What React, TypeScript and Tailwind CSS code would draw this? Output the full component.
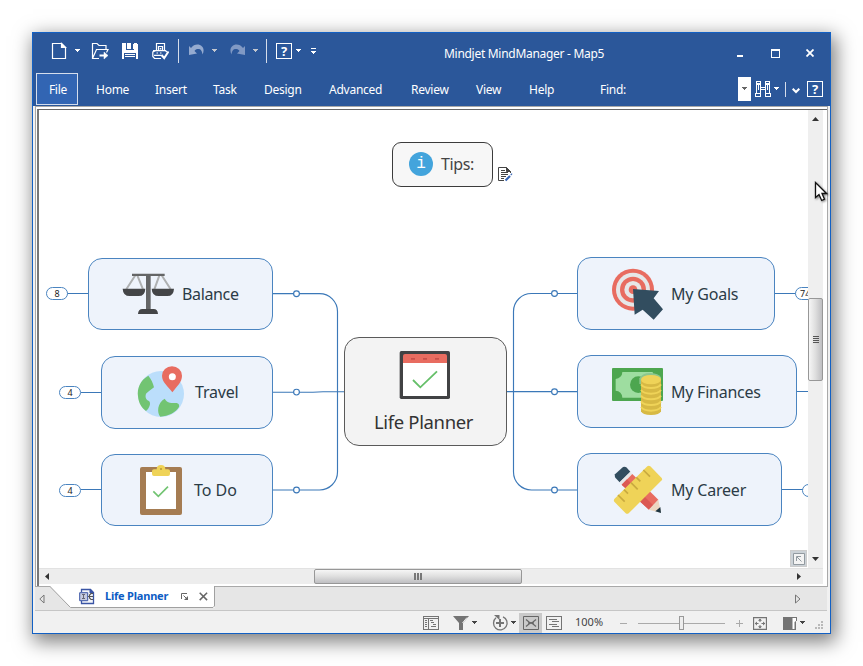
import type { ReactNode } from "react";

const UI = "font-['Noto_Sans','Open_Sans',sans-serif]";

function Caret({ className = "", color = "#fff" }: { className?: string; color?: string }) {
  return (
    <svg width="6" height="4" viewBox="0 0 6 4" className={`shrink-0 ${className}`} shapeRendering="crispEdges">
      <path d="M0 0h5v1h-1v1h-1v1h-1v-1h-1v-1h-1z" fill={color} />
    </svg>
  );
}

function HelpBox({ className = "" }: { className?: string }) {
  return (
    <span
      className={`flex h-4 w-4 shrink-0 items-center justify-center border border-white font-['Noto_Sans'] text-[13px] leading-none font-bold text-white ${className}`}
    >
      ?
    </span>
  );
}

function TitleBar() {
  return (
    <div className="flex h-10 shrink-0 items-start">
      <svg className="mt-[9px] ml-[18px] shrink-0" width="16" height="18" fill="none" stroke="#fff" strokeWidth="1.2">
        <path d="M1.5 1.5h9l4 4v11h-13z" />
        <path d="M10.5 1.5v4h4z" fill="#fff" />
      </svg>
      <Caret className="mt-4 ml-2" />
      <svg className="mt-[9px] ml-2.5 shrink-0" width="18" height="18" fill="none" stroke="#fff" strokeWidth="1.2">
        <path d="M8 16.500H1.500V1.500h4.500l2 2h7v4.500M1.500 16.500l4-9h11.500l-1.500 3" />
        <path d="M8.500 13.500h6" strokeWidth="2" />
        <path d="M13 10l4 3.500-4 3.500z" strokeWidth=".5" fill="#fff" />
      </svg>
      <svg className="mt-[10px] ml-[13px] shrink-0" width="16" height="16" shapeRendering="crispEdges">
        <path d="M0 0h14l2 2v14H0z" fill="#fff" />
        <path d="M4 0h8v7H4zM2 10h12v6H2z" fill="#2b579a" />
        <path d="M5 0h4v6H5z" fill="#fff" />
        <path d="M11 1h1v5h-1zM3 11h10v1H3zM3 13h10v1H3z" fill="#fff" />
      </svg>
      <svg className="mt-[9px] ml-[14px] shrink-0" width="17" height="18" fill="none" stroke="#fff" strokeWidth="1.200">
        <path d="M4.500 8V1.500h8V8M6.500 8V4.500h4V8" />
        <path d="M8.500 7.500V6" strokeWidth="1.500" />
        <path d="M4 8.500L.800 10v4.500l1.700 2H9M1 8.700h12.500l1.500 1.300M2 13.300h7.500M4.500 11h1.500M8 11h1.500" />
        <path d="M9.500 13l2.700 3L16.500 9.500" strokeWidth="2" />
      </svg>
      <i className="mt-1.5 ml-[9px] h-6 w-px bg-white/80" />
      <svg className="mt-[11px] ml-2.5 shrink-0" width="16" height="13">
        <path d="M0 2l2 2C5 0 10-.500 13 2.500c2 2 2 5 .5 8C13 7 12 5 9 5 7.500 5 6.500 5.500 5.500 7L8 9.500 0 11z" fill="#95abd0" />
      </svg>
      <Caret className="mt-4 ml-[7px]" color="#c3c7cf" />
      <svg className="mt-[11px] ml-3 shrink-0" width="16" height="13">
        <path d="M15 2l-2 2C10 0 5-.500 2 2.500c-2 2-2 5-.5 8C2 7 3 5 6 5c1.500 0 2.500.5 3.500 2L7 9.500 15 11z" fill="#8099c4" />
      </svg>
      <Caret className="mt-4 ml-[7px]" color="#c3c7cf" />
      <i className="mt-1.5 ml-[7px] h-6 w-px bg-white/80" />
      <HelpBox className="mt-2.5 ml-[9px]" />
      <Caret className="mt-4 ml-1" />
      <svg className="mt-[15px] ml-[9px] shrink-0" width="6" height="7" shapeRendering="crispEdges">
        <path d="M0 0h5v1H0zM0 3h5v1H4v1H3v1H2V5H1V4H0z" fill="#fff" />
      </svg>
      <span className="mt-3 ml-[127px] w-[164px] text-[12px] leading-[18px] tracking-[-0.29px] whitespace-nowrap text-white">
        Mindjet MindManager - Map5
      </span>
      <i className="mt-[22px] ml-[129px] h-0.5 w-1.5 bg-white" />
      <i className="mt-4 ml-7 h-[9px] w-[9px] border border-t-2 border-white" />
      <svg className="mt-4 ml-[26px] shrink-0" width="8" height="8">
        <path d="M.5.5l7 7M7.500.5l-7 7" stroke="#fff" strokeWidth="1.800" />
      </svg>
    </div>
  );
}

function MenuBar() {
  return (
    <div className="flex h-8 shrink-0 items-center text-[12px] leading-4 tracking-[-0.25px] whitespace-nowrap text-white">
      <span className="ml-[3px] flex h-8 w-[42px] items-center justify-center border border-[#d5deed] bg-[#3265b3] pt-px pl-0.5">
        File
      </span>
      <span className="ml-[18px] w-[59px] pt-px">Home</span>
      <span className="w-[58px] pt-px">Insert</span>
      <span className="w-[51px] pt-px">Task</span>
      <span className="w-[65px] pt-px">Design</span>
      <span className="w-[82px] pt-px">Advanced</span>
      <span className="w-[65px] pt-px">Review</span>
      <span className="w-[53px] pt-px">View</span>
      <span className="w-[71px] pt-px">Help</span>
      <span className="w-[138px] pt-px">Find:</span>
      <span className="flex h-6 w-[13px] items-center justify-center bg-white">
        <Caret color="#666" />
      </span>
      <svg className="ml-1 shrink-0" width="16" height="16" fill="none" stroke="#fff" shapeRendering="crispEdges">
        <path d="M1.500.500h4v2h-4zM10.500.500h4v2h-4zM1.500 3.500h4v9h-4zM10.500 3.500h4v9h-4zM.500 12.500h5v3h-5zM10.500 12.500h5v3h-5zM5.500 6.500h5M5.500 8.500h5M3.500 3.500v5M12.500 3.500v5" />
      </svg>
      <Caret className="ml-[3px]" />
      <i className="ml-[5px] h-[15px] w-px bg-white/80" />
      <svg className="mt-1 ml-1.5 shrink-0" width="8" height="6" fill="none">
        <path d="M.7.700L4 4 7.300.700" stroke="#fff" strokeWidth="2" />
      </svg>
      <HelpBox className="ml-[7px]" />
    </div>
  );
}

function ScalesIcon() {
  return (
    <svg width="52" height="42" viewBox="258 102 156 126">
      <path d="M299 107l-28 44M303 107l18 44M371 107l-16 44M376 107l28 44" stroke="#aeb0b1" strokeWidth="6" />
      <path d="M288 104h98v7H288zM330 108h14v103H330z" fill="#646566" />
      <path d="M260 149h68q-1 22-20 22h-27q-20 0-21-22zM347 149h67q-1 22-20 22h-26q-20 0-21-22zM306 225q1-15 13-15h34q12 0 13 15z" fill="#444547" />
    </svg>
  );
}

function GlobeIcon() {
  return (
    <svg width="48" height="52" viewBox="303 78 144 156">
      <circle cx="375" cy="162" r="69" fill="#bbdefb" />
      <path d="M337 107c-25 14-34 39-31 62 2 22 12 36 24 44 10-7 16-24 9-30-10-5-12-12-9-22 8-6 14-12 24-19-3-14-8-24-17-35zM386 176c8 15 22 12 34 13 8 0 11 7 9 12-10 16-31 28-56 29-11-13-9-41 13-54z" fill="#72c472" />
      <path d="M409 157c-14-20-31-30-31-50a30 28 0 0 1 60 0c0 20-15 31-29 50z" fill="#e86c60" />
      <circle cx="409" cy="110" r="10.500" fill="#fff" />
    </svg>
  );
}

function ClipboardIcon() {
  return (
    <svg width="44" height="52" viewBox="309 372 132 156">
      <rect x="312" y="381" width="126" height="144" rx="6" fill="#a57c52" />
      <path d="M330 396h90v111h-90z" fill="#fff" />
      <path d="M348 393q0-5 6-5h8q0-13 13-13t13 13h8q6 0 6 5v9q0 6-6 6h-42q-6 0-6-6z" fill="#efd358" />
      <circle cx="375" cy="387" r="3" fill="#b89b35" />
      <path d="M352 454l15 15 29-29" fill="none" stroke="#72c472" strokeWidth="5" />
    </svg>
  );
}

function CalendarIcon() {
  return (
    <svg width="52" height="50" viewBox="207 660 156 150">
      <rect x="209" y="663" width="151" height="144" rx="5" fill="#414244" />
      <path d="M219 698h132v100H219z" fill="#fff" />
      <path d="M219 699v-21q0-6 6-6h120q6 0 6 6v21z" fill="#e86c60" />
      <path d="M243 684h12v5h-12zM279 684h12v5h-12zM315 684h12v5h-12z" fill="#c9504a" />
      <path d="M249 750l22 22 50-48" fill="none" stroke="#65bf69" strokeWidth="5.500" />
    </svg>
  );
}

function TargetIcon() {
  return (
    <svg width="52" height="52" viewBox="156 81 156 156">
      <circle cx="219" cy="146" r="63" fill="#e86c60" />
      <circle cx="219" cy="146" r="51" fill="#e6e7e8" />
      <circle cx="219" cy="146" r="39" fill="#e86c60" />
      <circle cx="219" cy="146" r="26" fill="#e6e7e8" />
      <circle cx="219" cy="146" r="13" fill="#e86c60" />
      <path d="M219 144l78 6-16 22 28 33-28 31-33-30-24 15z" fill="#324d5f" />
    </svg>
  );
}

function MoneyIcon() {
  return (
    <svg width="52" height="49" viewBox="156 66 156 147">
      <rect x="156" y="69" width="153" height="99" rx="3" fill="#4da64f" />
      <path d="M187 81h91a21 21 0 0 0 20 21v35a21 21 0 0 0-20 21h-91a21 21 0 0 0-20-21v-35a21 21 0 0 0 20-21z" fill="#9edda0" />
      <circle cx="235" cy="119" r="25" fill="#4da64f" />
      <path d="M238 100q10-17 35-16 22 1 30 13v20h-65z" fill="#8cc68e" />
      <path d="M243 104h60v95q-4 11-30 11t-30-11z" fill="#d7b944" />
      <g fill="none" stroke="#efd358" strokeWidth="6">
        <path d="M243 118q8 11 30 11t30-11M243 135q8 11 30 11t30-11M243 152q8 11 30 11t30-11M243 169q8 11 30 11t30-11M243 186q8 11 30 11t30-11" />
      </g>
      <ellipse cx="273" cy="104" rx="30" ry="14" fill="#efd358" />
    </svg>
  );
}

function PencilRulerIcon() {
  return (
    <svg width="52" height="50" viewBox="156 360 156 150">
      <path d="M165 388l24-22q6-2 10 1l12 13-32 32-13-14q-3-5-1-10z" fill="#324d5f" />
      <path d="M211 380l6 7-32 32-6-7z" fill="#e6e7e8" />
      <path d="M217 387l78 77-28 30-82-75z" fill="#e86c60" />
      <path d="M201 403l78 77-12 14-82-75z" fill="#db5853" />
      <path d="M295 464l8 39-37-9z" fill="#ecd7c1" />
      <path d="M301 486l2 18-17-5z" fill="#1d3440" />
      <path d="M262 364q4-3 9 0l34 35q3 4 0 7l-99 99q-5 3-9 0l-34-35q-3-4 0-8z" fill="#efd358" />
      <path d="M250 375l20 20M229 397l12 12M213 413l20 20M192 434l12 12M174 450l20 20" stroke="#c9aa3f" strokeWidth="5" />
    </svg>
  );
}

function Topic({ box, icon, label, text }: { box: string; icon: ReactNode; label: string; text: string }) {
  return (
    <div
      className={`absolute flex items-center rounded-[14px] border border-[#4a84c0] bg-[#eef3fb] whitespace-nowrap text-[#2b3b46] ${box}`}
    >
      {icon}
      <span className={`text-[16px] leading-6 ${text}`}>{label}</span>
    </div>
  );
}

function Count({ place, value }: { place: string; value: string }) {
  return (
    <span
      className={`absolute flex h-[13px] items-center rounded-full border border-[#4a84c0] bg-white text-[9px] leading-none text-[#222] ${place}`}
    >
      {value}
    </span>
  );
}

function MapCanvas() {
  return (
    <div className="relative h-[458px] w-[769px] shrink-0 overflow-hidden bg-white">
      <svg className="absolute inset-0" width="769" height="458" viewBox="39 110 769 458" fill="none" stroke="#3b78b8" strokeWidth="1.150">
        <path d="M273 293.600H319.500a18 18 0 0 1 18 18V472a18 18 0 0 1-18 18H273M273 392.200h40l10-.5h21" />
        <path d="M577 293.500H531.500a18 18 0 0 0-18 18V472a18 18 0 0 0 18 18H577M507 391.600h70" />
        <path d="M67 293.500h21M81 392.500h20M81 489.500h20M775 293.500h21M797 391.500h11M782 489.500h21" />
        <g fill="#fff">
          <circle cx="296.500" cy="293.700" r="2.900" />
          <circle cx="296.500" cy="392.100" r="2.900" />
          <circle cx="296.500" cy="490" r="2.900" />
          <circle cx="554.500" cy="293.500" r="2.900" />
          <circle cx="554.500" cy="391.700" r="2.900" />
          <circle cx="554.500" cy="490" r="2.900" />
        </g>
      </svg>

      <div className="absolute top-8 left-[353px] flex h-[45px] w-[101px] items-center rounded-[9px] border border-[#3c3c3c] bg-[#f7f7f7] pb-px whitespace-nowrap">
        <span className="ml-4 flex h-6 w-6 items-center justify-center rounded-full bg-[#43a4dc] font-['Liberation_Mono'] text-[16px] leading-none text-white">
          i
        </span>
        <span className="ml-2 text-[16px] leading-6 tracking-[-0.4px] text-[#444]">Tips:</span>
      </div>
      <svg className="absolute top-[57px] left-[459px]" width="15" height="15" fill="none" stroke="#444">
        <path d="M6 13.500H.500V.500h8l4 4V6M3 3.500h4M3 5.500h7M3 7.500h7M3 9.500h5M3 11.500h3" />
        <path d="M8.500.500v4h4z" fill="#444" />
        <path d="M7.500 13.500l4.500-4.500" stroke="#3564b5" strokeWidth="2.200" />
        <path d="M13 7l.8.800" stroke="#3564b5" strokeWidth="2" />
      </svg>

      <Topic box="top-[148px] left-[49px] h-[72px] w-[185px] pl-[33px]" icon={<ScalesIcon />} label="Balance" text="ml-2 tracking-[-0.35px]" />
      <Topic box="top-[246px] left-[62px] h-[73px] w-[172px] pb-px pl-[35px]" icon={<GlobeIcon />} label="Travel" text="ml-2.5 tracking-[-0.2px]" />
      <Topic box="top-[344px] left-[62px] h-[72px] w-[172px] pl-[37px]" icon={<ClipboardIcon />} label="To Do" text="ml-[11px]" />
      <Topic box="top-[147px] left-[538px] h-[73px] w-[198px] pl-[34px]" icon={<TargetIcon />} label="My Goals" text="ml-[7px] tracking-[-0.2px]" />
      <Topic box="top-[245px] left-[538px] h-[73px] w-[220px] pl-[34px]" icon={<MoneyIcon />} label="My Finances" text="ml-[7px] tracking-[-0.25px]" />
      <Topic box="top-[343px] left-[538px] h-[73px] w-[205px] pl-[34px]" icon={<PencilRulerIcon />} label="My Career" text="ml-[7px] tracking-[-0.2px]" />

      <div className="absolute top-[227px] left-[305px] flex h-[109px] w-[163px] flex-col items-start rounded-[15px] border border-[#5a5a5a] bg-[#f3f3f3] pt-3">
        <span className="ml-[54px]">
          <CalendarIcon />
        </span>
        <span className="mt-[9px] ml-[29px] text-[18.500px] leading-[26px] tracking-[-0.35px] whitespace-nowrap text-[#333]">
          Life Planner
        </span>
      </div>

      <Count place="top-[177px] left-[7px] w-[22px] justify-center" value="8" />
      <Count place="top-[276px] left-5 w-[22px] justify-center" value="4" />
      <Count place="top-[374px] left-5 w-[22px] justify-center" value="4" />
      <Count place="top-[177px] left-[756px] w-[24px] pl-1" value="74" />
      <Count place="top-[374px] left-[763px] w-[22px]" value="" />

      <span className="absolute top-[440px] left-[751px] flex h-[17px] w-[17px] items-center justify-center border border-[#ccc] bg-[#ccd2d7]">
        <svg width="12" height="12" fill="none" stroke="#929aa0">
          <path d="M.500.500h11v11H.500z" fill="#f3f3f3" />
          <path d="M3.500 8V3.500H8M4 4l4.500 4.500" />
        </svg>
      </span>
    </div>
  );
}

function VerticalScroll() {
  return (
    <div className="flex h-[458px] w-[15px] shrink-0 flex-col items-center bg-[#efefef]">
      <svg className="mt-[7px] shrink-0" width="7" height="4">
        <path d="M0 4l3.500-4L7 4z" fill="#333" />
      </svg>
      <div className="mt-[177px] flex h-[83px] w-[15px] shrink-0 flex-col items-center justify-center gap-px rounded-[2px] border border-[#979797] bg-linear-to-r from-[#f6f6f6] via-[#dedede] to-[#bfbfc2]">
        <i className="h-px w-1.5 bg-[#555]" />
        <i className="h-px w-1.5 bg-[#555]" />
        <i className="h-px w-1.5 bg-[#555]" />
        <i className="h-px w-1.5 bg-[#555]" />
      </div>
      <svg className="mt-auto mb-[7px] shrink-0" width="7" height="4">
        <path d="M0 0l3.500 4L7 0z" fill="#333" />
      </svg>
    </div>
  );
}

function HorizontalScroll() {
  return (
    <div className="flex h-4 w-[784px] shrink-0 items-center border-t border-[#e2e2e2] bg-[#ededed] pb-px">
      <svg className="ml-1.5 shrink-0" width="4" height="7">
        <path d="M4 0L0 3.500 4 7z" fill="#333" />
      </svg>
      <div className="ml-[265px] flex h-[15px] w-[208px] shrink-0 items-center justify-center gap-px rounded-[2px] border border-[#979797] bg-linear-to-b from-[#f6f6f6] via-[#dedede] to-[#bfbfc2]">
        <i className="h-[7px] w-0.5 bg-[#777]" />
        <i className="h-[7px] w-0.5 bg-[#777]" />
        <i className="h-[7px] w-0.5 bg-[#777]" />
      </div>
      <svg className="ml-[275px] shrink-0" width="4" height="7">
        <path d="M0 0l4 3.500L0 7z" fill="#333" />
      </svg>
    </div>
  );
}

function DocumentTabs() {
  return (
    <div className="mr-[3px] ml-0.5 flex h-6 shrink-0 items-start border-b border-[#c6c6c6] bg-[#e6e6e6]">
      <svg className="mt-[7px] ml-1 shrink-0" width="6" height="10" fill="none" stroke="#777">
        <path d="M5 1v8L.800 5z" />
      </svg>
      <div className="relative ml-[5px] flex h-[22px] w-[165px] shrink-0 items-center">
        <svg className="absolute -top-px left-0" width="165" height="23">
          <path d="M0 0h164.500v22H20.500z" fill="#fff" />
          <path d="M0 .5l20.500 21H163l1.500-1.500V0" fill="none" stroke="#a0a0a0" />
        </svg>
        <svg className="relative -mt-1 ml-[29px] shrink-0" width="17" height="17" fill="none" stroke="#3a55a5">
          <path d="M2.500 4V1.500h9l3 3v11h-12V13" strokeWidth="1.300" fill="#f4f6fa" />
          <path d="M11 1.500v3.500h4z" fill="#3a55a5" />
          <path d="M.7 4.700h8v8h-8z" fill="#c6cce0" />
          <path d="M3 6.500h3M3 10.500h3M4.500 6.500v4" stroke="#667" />
          <path d="M9 8.500h5M14 5.500h-2l-1.500 1.500v3l1.500 1.500h2" stroke="#555" strokeWidth="1.100" />
        </svg>
        <span className="relative -mt-1 ml-[9px] w-[76px] text-[11px] font-bold tracking-[-0.2px] whitespace-nowrap text-[#0c5cc4]">
          Life Planner
        </span>
        <svg className="relative -mt-0.5 shrink-0" width="8" height="8" fill="none" stroke="#666">
          <path d="M.500 6V.500H6M2.500 2.500l3 3" />
          <path d="M7 3v4H3z" fill="#666" stroke="none" />
        </svg>
        <svg className="relative -mt-1 ml-2.5 shrink-0" width="9" height="9">
          <path d="M.700.700l7.400 7.400M8.100.700L.700 8.100" stroke="#666" strokeWidth="1.500" />
        </svg>
      </div>
      <svg className="mt-[7px] ml-[580px] shrink-0" width="6" height="10" fill="none" stroke="#777">
        <path d="M.500 1v8L5 5z" />
      </svg>
    </div>
  );
}

function StatusBar() {
  return (
    <div className="flex h-[22px] shrink-0 items-center bg-[#f1f1f1] pt-0.5">
      <svg className="ml-[390px] shrink-0" width="16" height="14" fill="none" stroke="#747474" shapeRendering="crispEdges">
        <path d="M.500.500h15v13H.500zM1 2.500h14M5.500 3v10M2 4.500h2M2 6.500h2M2 8.500h2M2 10.500h2M7 4.500h3M8 6.500h3M10 8.500h3M8 10.500h5" />
      </svg>
      <svg className="ml-3.5 shrink-0" width="17" height="14">
        <path d="M0 0h16l-6 7v7H6V7z" fill="#747474" />
        <path d="M14 1.500L9.500 7" stroke="#f1f1f1" />
      </svg>
      <Caret className="ml-0.5" color="#444" />
      <svg className="-mt-px ml-3.5 shrink-0" width="17" height="17" fill="none" stroke="#747474" strokeWidth="1.300">
        <path d="M4 3.800a6.800 6.800 0 1 0 7-1" />
        <path d="M8 5v8M4 9h8" strokeWidth="2" />
        <path d="M2 1h5.500v5z" fill="#747474" stroke="none" />
      </svg>
      <Caret className="ml-0.5" color="#444" />
      <span className="ml-0.5 flex h-5 w-[23px] shrink-0 items-center justify-center self-end bg-[#cacaca]">
        <svg width="16" height="14" fill="none" stroke="#666">
          <path d="M.500.500h15v13H.500z" />
          <path d="M3 3.500l3 2.500 2 1 2-1 3-2.500M3 10.500l3-2.500 2-1 2 1 3 2.500M5 7h6" strokeWidth="1.200" />
        </svg>
      </span>
      <svg className="ml-1 shrink-0" width="16" height="14" fill="none" stroke="#747474" shapeRendering="crispEdges">
        <path d="M.500.500h15v13H.500zM3 3.500h8M6 5.500h7M3 8.500h8M6 10.500h7" />
      </svg>
      <span className="-mt-0.5 ml-[13px] w-[45px] text-[11px] text-[#444]">100%</span>
      <i className="h-px w-[7px] bg-[#aaa]" />
      <i className="ml-[11px] h-px w-[41px] bg-[#aaa]" />
      <i className="h-[14px] w-[5px] border border-[#999] bg-[#eee]" />
      <i className="h-px w-[41px] bg-[#aaa]" />
      <svg className="ml-[11px] shrink-0" width="7" height="7" stroke="#aaa">
        <path d="M0 3.500h7M3.500 0v7" />
      </svg>
      <svg className="mt-px ml-2.5 shrink-0" width="14" height="13" fill="none" stroke="#747474">
        <path d="M.500.500h13v12H.500z" strokeWidth="1.300" />
        <path d="M2 6.500h3.500M8.500 6.500H12M7 2v3M7 8v3" />
        <path d="M7 1.500l2 2.200H5zM7 11.500l2-2.200H5zM1.800 6.500L4 4.500v4zM12.200 6.500L10 4.500v4z" fill="#747474" stroke="none" />
      </svg>
      <svg className="mt-px ml-4 shrink-0" width="14" height="13">
        <path d="M0 0h14v4h-1v9H0z" fill="#747474" />
        <path d="M9.500 1h3.500v3l-1.500 1v7H9.500z" fill="#fff" />
      </svg>
      <Caret className="ml-[3px]" color="#444" />
      <svg className="mt-1 ml-[9px] shrink-0" width="9" height="9" fill="#b9b9b9">
        <path d="M6 0h2v2H6zM3 3h2v2H3zM6 3h2v2H6zM0 6h2v2H0zM3 6h2v2H3zM6 6h2v2H6z" />
      </svg>
    </div>
  );
}

export default function App() {
  return (
    <div className={`relative h-[666px] w-[863px] overflow-hidden bg-white p-8 ${UI}`}>
      <div className="flex h-[602px] w-[799px] flex-col border border-[#1260c4] bg-[#f1f1f1] shadow-[3px_6px_18px_2px_rgba(0,0,0,0.5)]">
        <header className="flex h-[73px] shrink-0 flex-col bg-[#2b579a]">
          <TitleBar />
          <MenuBar />
        </header>
        <main className="mx-0.5 flex h-[481px] shrink-0 flex-col border border-[#a9a9a9] bg-white pt-0.5 pl-px">
          <div className="flex flex-1 flex-col border-t border-l-2 border-t-[#666] border-l-[#777]">
            <div className="flex">
              <MapCanvas />
              <VerticalScroll />
            </div>
            <HorizontalScroll />
          </div>
        </main>
        <DocumentTabs />
        <StatusBar />
      </div>
      <svg className="absolute top-[181px] left-[814px] drop-shadow-[1px_1px_1px_rgba(0,0,0,0.5)]" width="14" height="21">
        <path d="M1.500 1.500v15l3.500-3 2.700 6 2.800-1.300-2.500-5.700H12.500z" fill="#fff" stroke="#111" strokeWidth="1.300" />
      </svg>
    </div>
  );
}
